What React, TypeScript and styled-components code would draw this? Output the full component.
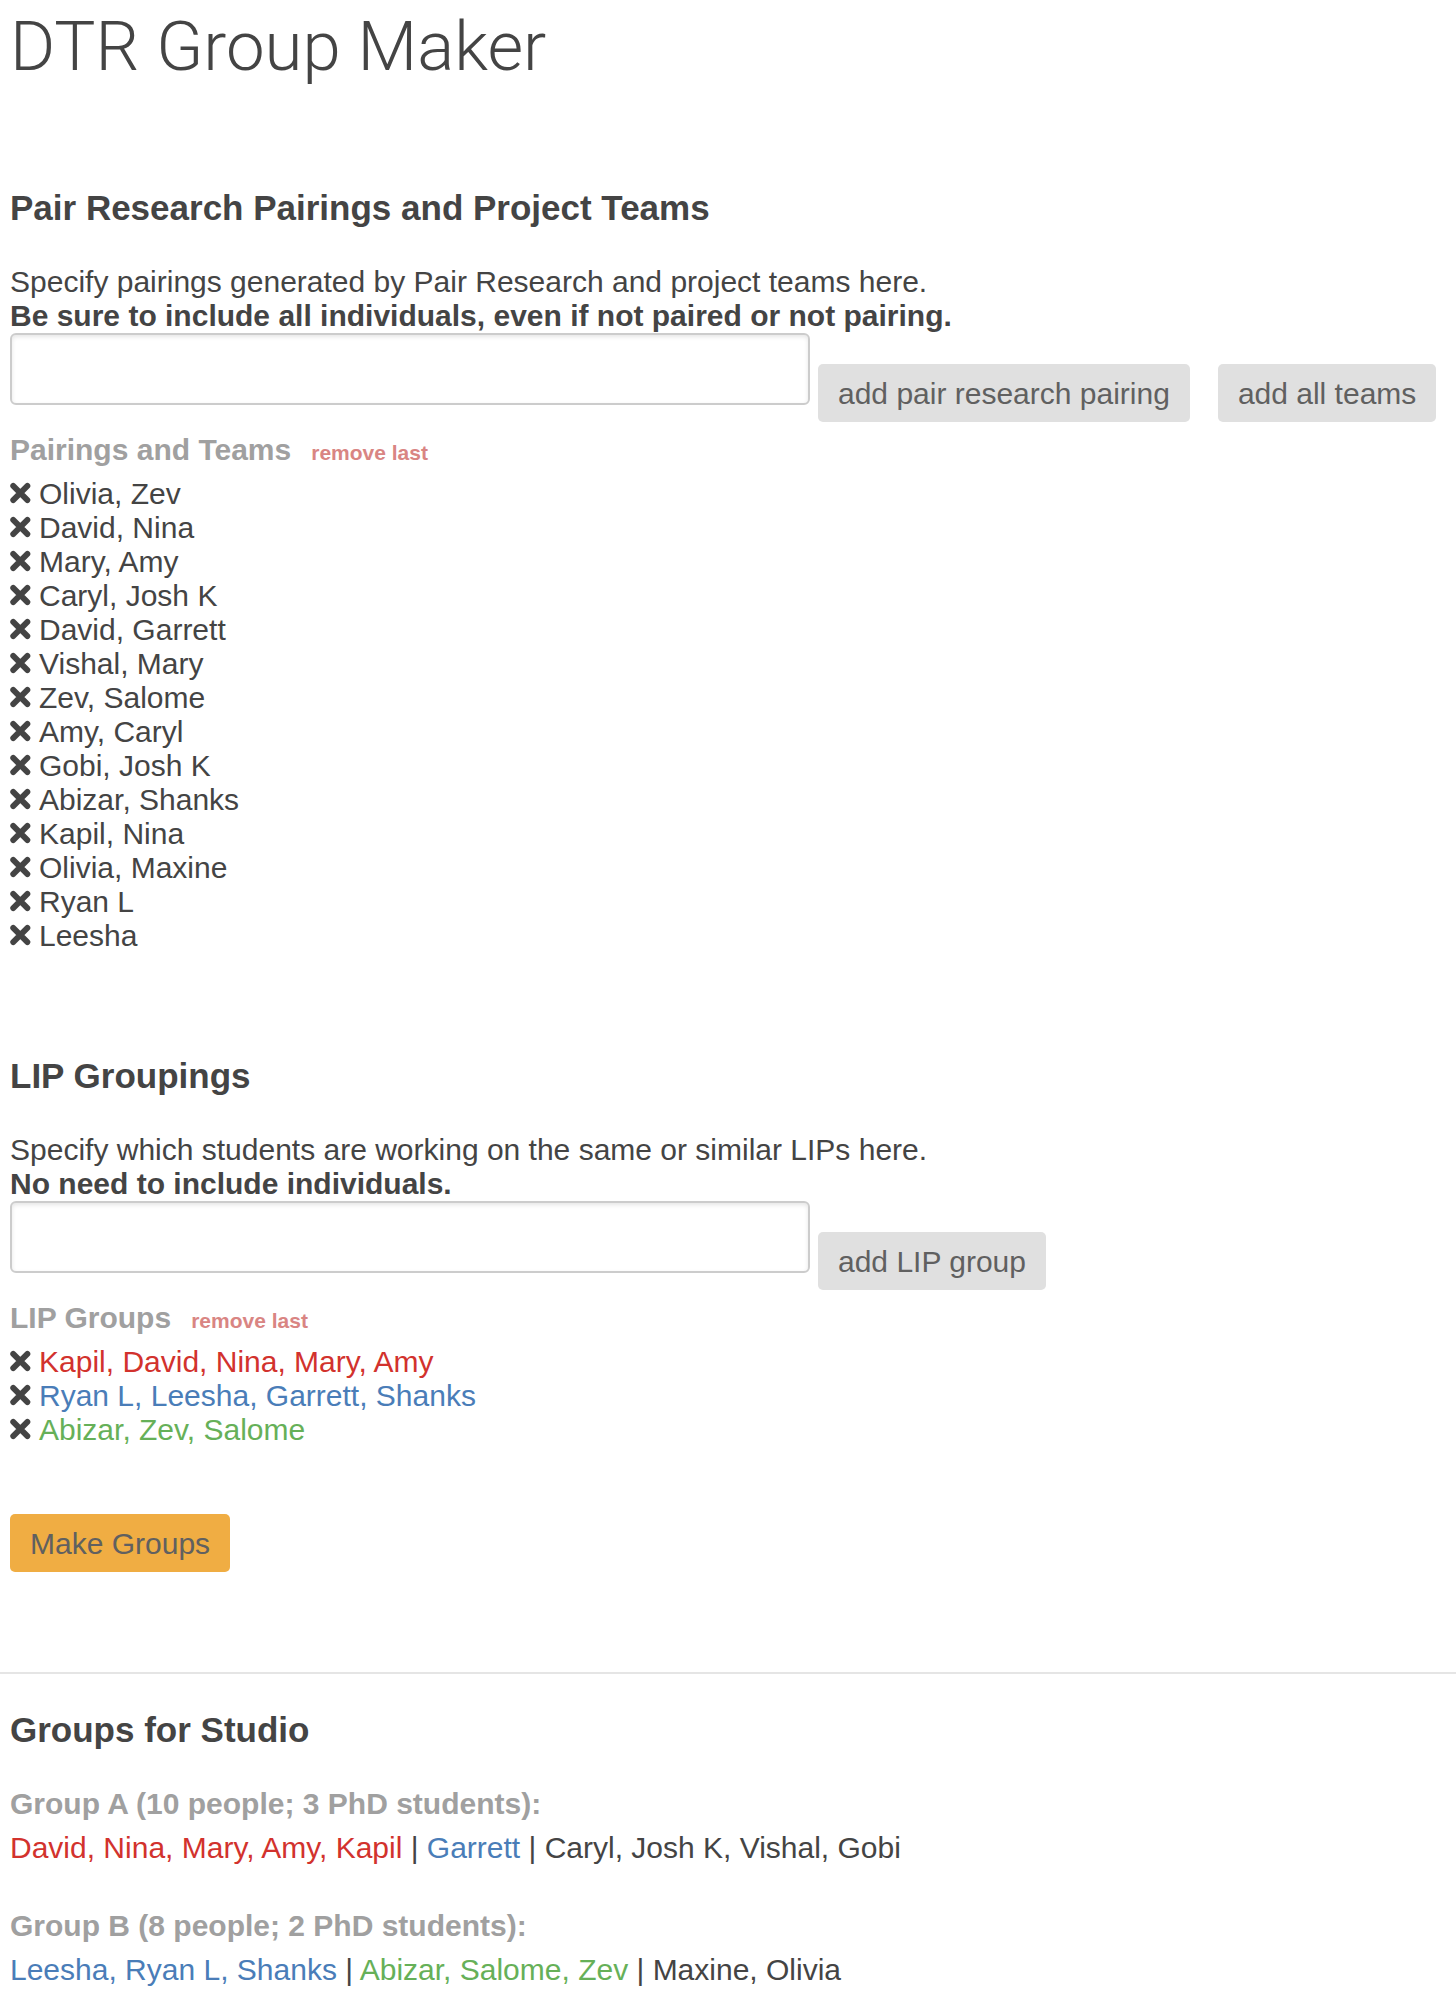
import React from "react";
import styled, { createGlobalStyle, css } from "styled-components";

const Global = createGlobalStyle`
  * { box-sizing: border-box; }
  body {
    margin: 0;
    background: #fff;
    color: #444;
    font-family: "Helvetica Neue", Helvetica, "Liberation Sans", Arial, sans-serif;
    font-size: 30px;
    line-height: 34px;
  }
  h1, h2, h3, p, ul { margin: 0; padding: 0; }
`;

const Content = styled.div`
  padding: 0 10px;
`;

const Title = styled.h1`
  padding-top: 6px;
  font-family: Roboto, "Liberation Sans", sans-serif;
  font-size: 69px;
  line-height: 82px;
  font-weight: 300;
`;

const Section = styled.section<{ $top: number }>`
  padding-top: ${(p) => p.$top}px;
`;

const Heading = styled.h2`
  margin-bottom: 37px;
  font-size: 35px;
  line-height: 40px;
  font-weight: 700;
`;

const Intro = styled.p`
  strong { display: block; }
`;

const Entry = styled.form`
  display: flex;
  flex-wrap: wrap;
  align-items: flex-start;
  gap: 8px;
`;

const Field = styled.input`
  width: 800px;
  max-width: 100%;
  height: 72px;
  padding: 8px 16px;
  border: 2px solid #ccc;
  border-radius: 6px;
  background: #fff;
  box-shadow: inset 0 2px 4px rgba(0, 0, 0, 0.1);
  color: inherit;
  font: inherit;
`;

const Actions = styled.div`
  display: flex;
  flex-wrap: wrap;
  gap: 28px;
  padding-top: 31px;
`;

const Button = styled.button<{ $primary?: boolean }>`
  height: 58px;
  padding: 2px 20px 0;
  border: 0;
  border-radius: 5px;
  background: ${(p) => (p.$primary ? "#f0ad43" : "#e0e0e0")};
  color: #606060;
  font: inherit;
  cursor: pointer;
`;

const ListHead = styled.div`
  display: flex;
  align-items: baseline;
  gap: 20px;
  padding: 11px 0 10px;
`;

const SubHeading = styled.h3`
  color: #a0a0a0;
  font-size: 30px;
  line-height: 34px;
  font-weight: 700;
`;

const RemoveLast = styled.button`
  padding: 0;
  border: 0;
  background: none;
  color: #d98583;
  font: inherit;
  font-size: 21px;
  line-height: 24px;
  font-weight: 700;
  cursor: pointer;
`;

const List = styled.ul`
  list-style: none;
`;

const Row = styled.li`
  display: flex;
  align-items: center;
  gap: 8px;
`;

const RemoveButton = styled.button`
  display: flex;
  padding: 0;
  border: 0;
  background: none;
  color: #444;
  cursor: pointer;
`;

const tones = { red: "#d2322d", blue: "#4a7db8", green: "#66b058", plain: "#444" };
type Tone = keyof typeof tones;

const Names = styled.span<{ $tone?: Tone }>`
  ${(p) => css`color: ${tones[p.$tone ?? "plain"]};`}
`;

const MakeRow = styled.div`
  padding: 67px 0 100px;
`;

const Divider = styled.hr`
  margin: 0;
  border: 0;
  border-top: 2px solid #e5e5e5;
`;

const Group = styled.div`
  margin-bottom: 44px;
`;

const Members = styled.p`
  margin-top: 10px;
`;

function Cross() {
  return (
    <svg width="21" height="24" viewBox="0 0 21 24" aria-hidden="true">
      <path
        d="M3.2 3.9 17.4 18.1M17.4 3.9 3.2 18.1"
        stroke="currentColor"
        strokeWidth="5.8"
        strokeLinecap="round"
      />
    </svg>
  );
}

function Entries({ title, items }: { title: string; items: { names: string; tone?: Tone }[] }) {
  return (
    <>
      <ListHead>
        <SubHeading>{title}</SubHeading>
        <RemoveLast type="button">remove last</RemoveLast>
      </ListHead>
      <List>
        {items.map((item) => (
          <Row key={item.names}>
            <RemoveButton type="button" aria-label={`Remove ${item.names}`}>
              <Cross />
            </RemoveButton>
            <Names $tone={item.tone}>{item.names}</Names>
          </Row>
        ))}
      </List>
    </>
  );
}

const pairings = [
  "Olivia, Zev", "David, Nina", "Mary, Amy", "Caryl, Josh K", "David, Garrett",
  "Vishal, Mary", "Zev, Salome", "Amy, Caryl", "Gobi, Josh K", "Abizar, Shanks",
  "Kapil, Nina", "Olivia, Maxine", "Ryan L", "Leesha",
].map((names) => ({ names }));

const lips: { names: string; tone: Tone }[] = [
  { names: "Kapil, David, Nina, Mary, Amy", tone: "red" },
  { names: "Ryan L, Leesha, Garrett, Shanks", tone: "blue" },
  { names: "Abizar, Zev, Salome", tone: "green" },
];

const groups: { title: string; parts: { names: string; tone?: Tone }[] }[] = [
  {
    title: "Group A (10 people; 3 PhD students):",
    parts: [
      { names: "David, Nina, Mary, Amy, Kapil", tone: "red" },
      { names: "Garrett", tone: "blue" },
      { names: "Caryl, Josh K, Vishal, Gobi" },
    ],
  },
  {
    title: "Group B (8 people; 2 PhD students):",
    parts: [
      { names: "Leesha, Ryan L, Shanks", tone: "blue" },
      { names: "Abizar, Salome, Zev", tone: "green" },
      { names: "Maxine, Olivia" },
    ],
  },
];

export default function App() {
  return (
    <main>
      <Global />
      <Content>
        <Title>DTR Group Maker</Title>
        <Section $top={100}>
          <Heading>Pair Research Pairings and Project Teams</Heading>
          <Intro>
            Specify pairings generated by Pair Research and project teams here.
            <strong>Be sure to include all individuals, even if not paired or not pairing.</strong>
          </Intro>
          <Entry onSubmit={(e) => e.preventDefault()}>
            <Field type="text" aria-label="Pair research pairing" />
            <Actions>
              <Button type="submit">add pair research pairing</Button>
              <Button type="button">add all teams</Button>
            </Actions>
          </Entry>
          <Entries title="Pairings and Teams" items={pairings} />
        </Section>
        <Section $top={103}>
          <Heading>LIP Groupings</Heading>
          <Intro>
            Specify which students are working on the same or similar LIPs here.
            <strong>No need to include individuals.</strong>
          </Intro>
          <Entry onSubmit={(e) => e.preventDefault()}>
            <Field type="text" aria-label="LIP group" />
            <Actions>
              <Button type="submit">add LIP group</Button>
            </Actions>
          </Entry>
          <Entries title="LIP Groups" items={lips} />
        </Section>
        <MakeRow>
          <Button type="button" $primary>Make Groups</Button>
        </MakeRow>
      </Content>
      <Divider />
      <Content>
        <Section $top={36}>
          <Heading>Groups for Studio</Heading>
          {groups.map((group) => (
            <Group key={group.title}>
              <SubHeading>{group.title}</SubHeading>
              <Members>
                {group.parts.map((part, i) => (
                  <React.Fragment key={part.names}>
                    {i > 0 && " | "}
                    <Names $tone={part.tone}>{part.names}</Names>
                  </React.Fragment>
                ))}
              </Members>
            </Group>
          ))}
        </Section>
      </Content>
    </main>
  );
}
